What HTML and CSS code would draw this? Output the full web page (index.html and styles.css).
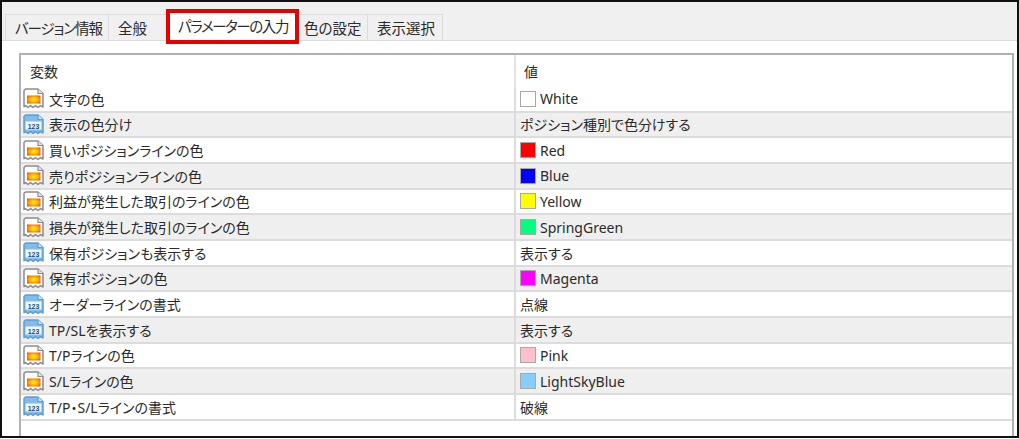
FILE: index.html
```html
<!DOCTYPE html>
<html lang="ja">
<head>
<meta charset="utf-8">
<title>パラメーターの入力</title>
<link rel="stylesheet" href="styles.css">
</head>
<body>
<svg class="defs" width="0" height="0" aria-hidden="true">
  <defs>
    <radialGradient id="heat" cx="0.5" cy="0.5" r="0.62">
      <stop offset="0" stop-color="#fff030"/>
      <stop offset="0.45" stop-color="#ffc000"/>
      <stop offset="1" stop-color="#ff4e00"/>
    </radialGradient>
    <symbol id="icon-color" viewBox="0 0 21 21">
      <path d="M2.5 1H15L20 5.5V19L17.5 17.6L15 19.4L12.5 17.6L10 19.4L7.5 17.6L5 19.4L2.5 17.6L1 18.6V2.5Z" fill="#fff" stroke="#8c8c8c" stroke-width="1.5" stroke-linejoin="round"/>
      <path d="M15 1V5.5H20" fill="#e6e6e6" stroke="#8c8c8c" stroke-width="1.2"/>
      <rect x="4" y="7.5" width="13.5" height="8" fill="url(#heat)"/>
    </symbol>
    <symbol id="icon-num" viewBox="0 0 21 21">
      <path d="M2.5 1H15L20 5.5V19L17.5 17.6L15 19.4L12.5 17.6L10 19.4L7.5 17.6L5 19.4L2.5 17.6L1 18.6V2.5Z" fill="#86bbe8" stroke="#5c9fd8" stroke-width="1.5" stroke-linejoin="round"/>
      <path d="M15 1V5.5H20" fill="#cfe4f6" stroke="#5c9fd8" stroke-width="1.2"/>
      <rect x="2.5" y="7.5" width="16" height="8" fill="#eef6fc"/>
      <text x="10.5" y="14.5" text-anchor="middle" class="icon-text">123</text>
    </symbol>
  </defs>
</svg>
<div class="frame">
  <nav class="tabs">
    <div class="tab tab-first">バージョン情報</div>
    <div class="tab tab-before">全般</div>
    <div class="tab tab-active">パラメーターの入力</div>
    <div class="tab tab-after">色の設定</div>
    <div class="tab">表示選択</div>
  </nav>
  <main class="panel">
    <section class="table">
      <div class="head">
        <div class="cell-name">変数</div>
        <div class="cell-value head-value">値</div>
      </div>
      <div class="row">
        <div class="cell-name"><svg class="icon"><use href="#icon-color"/></svg>文字の色</div>
        <div class="cell-value"><span class="swatch swatch-white"></span>White</div>
      </div>
      <div class="row row-alt">
        <div class="cell-name"><svg class="icon"><use href="#icon-num"/></svg>表示の色分け</div>
        <div class="cell-value">ポジション種別で色分けする</div>
      </div>
      <div class="row">
        <div class="cell-name"><svg class="icon"><use href="#icon-color"/></svg>買いポジションラインの色</div>
        <div class="cell-value"><span class="swatch swatch-red"></span>Red</div>
      </div>
      <div class="row row-alt">
        <div class="cell-name"><svg class="icon"><use href="#icon-color"/></svg>売りポジションラインの色</div>
        <div class="cell-value"><span class="swatch swatch-blue"></span>Blue</div>
      </div>
      <div class="row">
        <div class="cell-name"><svg class="icon"><use href="#icon-color"/></svg>利益が発生した取引のラインの色</div>
        <div class="cell-value"><span class="swatch swatch-yellow"></span>Yellow</div>
      </div>
      <div class="row row-alt">
        <div class="cell-name"><svg class="icon"><use href="#icon-color"/></svg>損失が発生した取引のラインの色</div>
        <div class="cell-value"><span class="swatch swatch-green"></span>SpringGreen</div>
      </div>
      <div class="row">
        <div class="cell-name"><svg class="icon"><use href="#icon-num"/></svg>保有ポジションも表示する</div>
        <div class="cell-value">表示する</div>
      </div>
      <div class="row row-alt">
        <div class="cell-name"><svg class="icon"><use href="#icon-color"/></svg>保有ポジションの色</div>
        <div class="cell-value"><span class="swatch swatch-magenta"></span>Magenta</div>
      </div>
      <div class="row">
        <div class="cell-name"><svg class="icon"><use href="#icon-num"/></svg>オーダーラインの書式</div>
        <div class="cell-value">点線</div>
      </div>
      <div class="row row-alt">
        <div class="cell-name"><svg class="icon"><use href="#icon-num"/></svg>TP/SLを表示する</div>
        <div class="cell-value">表示する</div>
      </div>
      <div class="row">
        <div class="cell-name"><svg class="icon"><use href="#icon-color"/></svg>T/Pラインの色</div>
        <div class="cell-value"><span class="swatch swatch-pink"></span>Pink</div>
      </div>
      <div class="row row-alt">
        <div class="cell-name"><svg class="icon"><use href="#icon-color"/></svg>S/Lラインの色</div>
        <div class="cell-value"><span class="swatch swatch-sky"></span>LightSkyBlue</div>
      </div>
      <div class="row">
        <div class="cell-name"><svg class="icon"><use href="#icon-num"/></svg>T/P・S/Lラインの書式</div>
        <div class="cell-value">破線</div>
      </div>
    </section>
  </main>
</div>
</body>
</html>
```

FILE: styles.css
```css
* { box-sizing: border-box; }

html, body {
  margin: 0;
  background: #fff;
}

body {
  width: 1019px;
  height: 439px;
  overflow: hidden;
  font-family: "Noto Sans", "Noto Sans CJK JP", sans-serif;
  font-size: 14px;
  font-feature-settings: "palt";
  color: #2b2b2b;
}

.defs { position: absolute; }

.icon-text {
  font-family: "Liberation Sans", sans-serif;
  font-size: 7px;
  font-weight: 700;
  fill: #174f86;
}

.frame {
  width: 1019px;
  height: 438px;
  border: 2px solid #111;
  display: flex;
  flex-direction: column;
}

.tabs {
  height: 39px;
  flex: none;
  display: flex;
  align-items: flex-end;
  padding-left: 3px;
  background: #f0f0f0;
  border-bottom: 1px solid #dcdcdc;
}

.tab {
  height: 26px;
  padding: 0 7px 0 9px;
  display: flex;
  align-items: center;
  border: 1px solid #dcdcdc;
  border-bottom: 0;
  white-space: nowrap;
  margin-right: -1px;
  font-size: 14.5px;
}

.tab-first {
  width: 104px;
  letter-spacing: -1.1px;
}

.tab-before {
  border-right: 0;
  width: 58px;
  margin-right: 0;
}

.tab-active {
  position: relative;
  z-index: 1;
  height: 35px;
  width: 133px;
  margin: 0 0 -4px 0;
  padding: 0 8px 2px;
  background: #fff;
  border: 4px solid #e60000;
  letter-spacing: -1.4px;
}

.tab-after {
  border-left: 0;
  width: 69px;
  padding-left: 5px;
}

.panel {
  flex: 1;
  min-height: 0;
  padding: 12px 3px 0 17px;
  background: #fff;
}

.table {
  height: 100%;
  border: 2px solid #aeb2b5;
  border-bottom: 0;
  background: #fff;
}

.head, .row {
  display: grid;
  grid-template-columns: 493px 1fr;
}

.head { height: 32px; align-items: center; }

.row {
  height: 25.67px;
  align-items: center;
  border-bottom: 2px solid #dcdcdc;
}

.row-alt { background: #efefef; }

.cell-name {
  display: flex;
  align-items: center;
  gap: 5px;
  height: 100%;
  padding-left: 9px;
  white-space: nowrap;
}

.row .cell-name { padding-left: 2px; }

.cell-value {
  display: flex;
  align-items: center;
  height: 100%;
  padding-left: 4px;
  border-left: 2px solid #dcdcdc;
  white-space: nowrap;
}

.head-value { padding-left: 8px; border-left-color: #e4e4e4; }

.icon {
  width: 21px;
  height: 21px;
  flex: none;
}

.swatch {
  width: 16px;
  height: 16px;
  margin-right: 4px;
  border: 1px solid #a8a8a8;
  flex: none;
}

.swatch-white { background: #fff; }
.swatch-red { background: #f00; }
.swatch-blue { background: #00f; }
.swatch-yellow { background: #ff0; }
.swatch-green { background: #00ff7f; }
.swatch-magenta { background: #f0f; }
.swatch-pink { background: #ffc0cb; }
.swatch-sky { background: #87cefa; }
```
